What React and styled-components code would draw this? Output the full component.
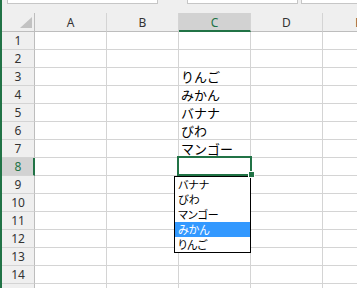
import React from 'react';
import styled, { createGlobalStyle } from 'styled-components';

const GlobalStyle = createGlobalStyle`
  html, body { margin: 0; padding: 0; background: #fff; overflow: hidden; }
  body { font-family: "Noto Sans", "Noto Sans CJK JP", sans-serif; }
  * { box-sizing: border-box; }
`;

const GREEN = '#217346';
const GRID = '#d4d4d4';
const HEAD_LINE = '#bdbdbd';

const Window = styled.div`
  display: flex;
  width: 357px;
  height: 288px;
  overflow: hidden;
  background: #fff;
`;

const GreenStrip = styled.div`
  width: 2px;
  flex: none;
  background: ${GREEN};
`;

const Main = styled.div`
  flex: 1;
  min-width: 0;
  display: flex;
  flex-direction: column;
  overflow: hidden;
`;

const TopBar = styled.div`
  height: 13px;
  flex: none;
  display: flex;
  align-items: flex-start;
  background: #efefef;
`;

const BarBox = styled.div`
  flex: none;
  height: 4px;
  width: ${p => p.$w}px;
  margin-left: ${p => p.$gap}px;
  background: #fff;
  border: 1px solid #c6c6c6;
  border-top: none;
`;

const Sheet = styled.div`
  position: relative;
  display: grid;
  grid-template-columns: 33px repeat(5, 72px);
  grid-template-rows: 19px repeat(15, 18px);
`;

const Corner = styled.div`
  position: relative;
  background: #efefef;
  border-right: 1px solid ${HEAD_LINE};
  border-bottom: 1px solid ${HEAD_LINE};
  display: flex;
  align-items: flex-end;
  justify-content: flex-end;
  padding: 0 2px 3px 0;
`;

const ColHeader = styled.div`
  background: ${p => (p.$active ? '#d2d2d2' : '#efefef')};
  color: ${p => (p.$active ? GREEN : '#333')};
  border-right: 1px solid ${GRID};
  border-bottom: ${p => (p.$active ? `2px solid ${GREEN}` : `1px solid ${HEAD_LINE}`)};
  font-size: 12px;
  display: flex;
  align-items: center;
  justify-content: center;
  padding-top: ${p => (p.$active ? '1px' : '0')};
`;

const RowHeader = styled.div`
  background: ${p => (p.$active ? '#d2d2d2' : '#efefef')};
  color: ${p => (p.$active ? GREEN : '#333')};
  border-right: ${p => (p.$active ? `2px solid ${GREEN}` : `1px solid ${HEAD_LINE}`)};
  border-bottom: 1px solid ${GRID};
  font-size: 12px;
  display: flex;
  align-items: center;
  justify-content: center;
  padding-left: ${p => (p.$active ? '1px' : '0')};
`;

const Cell = styled.div`
  border-right: 1px solid ${GRID};
  border-bottom: 1px solid ${GRID};
  font-family: "Noto Sans CJK JP", sans-serif;
  font-size: 13px;
  line-height: 16px;
  color: #000;
  padding-left: 2px;
  display: flex;
  align-items: flex-end;
  white-space: nowrap;
  overflow: hidden;
`;

const Selection = styled.div`
  position: absolute;
  left: 175px;
  top: 143px;
  width: 75px;
  height: 20px;
  border: 2px solid ${GREEN};
  pointer-events: none;
`;

const FillHandle = styled.div`
  position: absolute;
  left: 247px;
  top: 159px;
  width: 5px;
  height: 5px;
  background: ${GREEN};
  outline: 1px solid #fff;
`;

const Dropdown = styled.ul`
  position: absolute;
  left: 172px;
  top: 163px;
  width: 77px;
  margin: 0;
  padding: 0;
  list-style: none;
  background: #fff;
  border: 1px solid #000;
`;

const Item = styled.li`
  height: 15px;
  line-height: 15px;
  padding-left: 3px;
  font-family: "Noto Sans CJK JP", sans-serif;
  font-feature-settings: "palt";
  font-size: 11px;
  background: ${p => (p.$selected ? '#3399ff' : 'transparent')};
  color: ${p => (p.$selected ? '#fff' : '#000')};
  white-space: nowrap;
  overflow: hidden;
`;

const columns = ['A', 'B', 'C', 'D', 'E'];
const data = { 3: 'りんご', 4: 'みかん', 5: 'バナナ', 6: 'びわ', 7: 'マンゴー' };
const options = ['バナナ', 'びわ', 'マンゴー', 'みかん', 'りんご'];

export default function App() {
  const rows = Array.from({ length: 15 }, (_, i) => i + 1);
  return (
    <>
      <GlobalStyle />
      <Window>
        <GreenStrip />
        <Main>
          <TopBar>
            <BarBox $gap={5} $w={151} />
            <BarBox $gap={29} $w={111} />
            <BarBox $gap={3} $w={70} />
          </TopBar>
          <Sheet>
            <Corner>
              <svg width="12" height="11" viewBox="0 0 12 11">
                <polygon points="0,11 12,11 12,0" fill="#c2c2c2" />
              </svg>
            </Corner>
            {columns.map(c => (
              <ColHeader key={c} $active={c === 'C'}>{c}</ColHeader>
            ))}
            {rows.map(r => (
              <React.Fragment key={r}>
                <RowHeader $active={r === 8}>{r}</RowHeader>
                {columns.map(c => (
                  <Cell key={c}>{c === 'C' && data[r] ? data[r] : ''}</Cell>
                ))}
              </React.Fragment>
            ))}
            <Selection />
            <Dropdown>
              {options.map(o => (
                <Item key={o} $selected={o === 'みかん'}>{o}</Item>
              ))}
            </Dropdown>
            <FillHandle />
          </Sheet>
        </Main>
      </Window>
    </>
  );
}
